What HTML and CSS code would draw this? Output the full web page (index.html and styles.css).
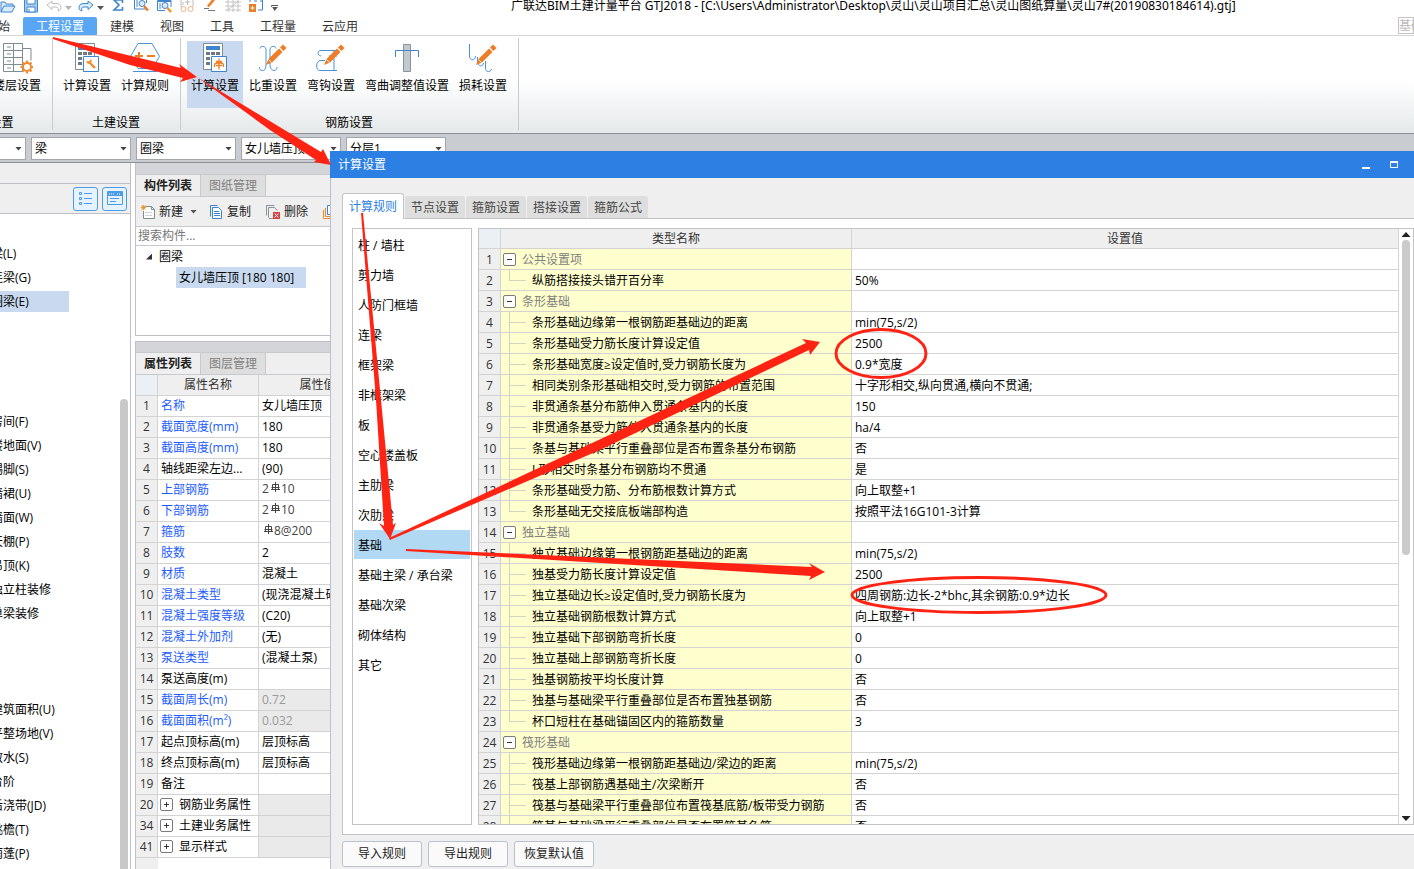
FILE: index.html
```html
<!DOCTYPE html>
<html lang="zh-CN">
<head>
<meta charset="utf-8">
<title>广联达BIM土建计量平台 GTJ2018</title>
<link rel="stylesheet" href="styles.css">
</head>
<body>
<div class="app">
  <header class="titlebar">
    <div class="quick">
      <button class="q" aria-label="打开"><svg width="16" height="16" viewBox="0 0 16 16"><path d="M1 12V2h4l1 2h7v2M1 12l3-6h11l-3 6z" class="lb"/></svg></button>
      <button class="q" aria-label="保存"><svg width="16" height="16" viewBox="0 0 16 16"><path d="M1.500-1h13v13h-13z" fill="#a9cdf0" stroke="#3f84cf"/><path d="M4-1h8v5H4z M4 7h8v5H4z" fill="#fff" stroke="#3f84cf"/><path d="M6 9v3" stroke="#3f84cf"/></svg></button>
      <span class="qpair"><button class="q" aria-label="撤销"><svg width="16" height="16" viewBox="0 0 16 16"><path d="M1 5l5-4v2.500h4c3 0 5 1.500 5 4 0 2-1 3-3 3.500 1-2.500 0-4-2-4H6v2.500z" fill="#fff" stroke="#bdbdbd"/></svg></button><i class="caret faint"></i></span>
      <span class="qpair"><button class="q" aria-label="恢复"><svg width="16" height="16" viewBox="0 0 16 16"><path d="M15 5l-5-4v2.500H6c-3 0-5 1.500-5 4 0 2 1 3 3 3.500-1-2.500 0-4 2-4h4v2.500z" fill="#d9ebfb" stroke="#3f84cf"/></svg></button><i class="caret"></i></span>
      <button class="q" aria-label="汇总计算"><svg width="16" height="16" viewBox="0 0 16 16"><path d="M12.500 3V0H4l5 5-5 5h8.500V7" fill="none" stroke="#3f84cf" stroke-width="1.600"/></svg></button>
      <button class="q" aria-label="查看计算式"><svg width="16" height="16" viewBox="0 0 16 16"><path d="M1.500-2v11h12" fill="none" stroke="#3f84cf"/><path d="M4-1v8M13.500-1v4" stroke="#3f84cf"/><circle cx="9" cy="3.500" r="3" class="lb"/><path d="M11 6l4 4.500" stroke="#ee7d26" stroke-width="2.500"/></svg></button>
      <button class="q" aria-label="查看工程量"><svg width="16" height="16" viewBox="0 0 16 16"><path d="M15 7V.500H1.500v10H9M1 1.500h14" fill="none" stroke="#3f84cf"/><circle cx="9" cy="5.500" r="3" class="lb"/><path d="M3 4h2M3 6h2M3 8h2" stroke="#3f84cf"/><path d="M11.500 8l3.500 4" stroke="#f0962a" stroke-width="2.500"/></svg></button>
      <button class="q" aria-label="查看钢筋"><svg width="16" height="16" viewBox="0 0 16 16"><path d="M2 7V-1h12v8M6 2h5M8.500-1v6M4 2v3" fill="none" stroke="#bcbcbc"/><circle cx="4.500" cy="9" r="2.500" fill="none" stroke="#f3b489"/><circle cx="11.500" cy="9" r="2.500" fill="none" stroke="#f3b489"/></svg></button>
      <button class="q" aria-label="编辑"><svg width="16" height="16" viewBox="0 0 16 16"><path d="M6 6.500L13-2" stroke="#ee7d26" stroke-width="2.600"/><path d="M2 8.500h5M6 10.500h7" stroke="#777"/></svg></button>
      <button class="q" aria-label="轴网"><svg width="16" height="16" viewBox="0 0 16 16"><path d="M0 2h16M0 6h16M0 10h16M3-1v13M8-1v13M13-1v13M3 10l10-9" fill="none" stroke="#c4c4c4"/></svg></button>
      <button class="q" aria-label="添加"><svg width="16" height="16" viewBox="0 0 16 16"><path d="M6 1h3M14.500-1v11H10M12 1h3M2-1v3" fill="none" stroke="#3f84cf"/><path d="M1 4h7v8H1z" fill="#ee7d26"/><path d="M2.500 8h4M4.500 6v4" stroke="#fff"/></svg></button>
      <i class="caret bar"></i>
    </div>
    <h1 class="apptitle">广联达BIM土建计量平台 GTJ2018 - [C:\Users\Administrator\Desktop\灵山\灵山项目汇总\灵山图纸算量\灵山7#(20190830184614).gtj]</h1>
  </header>

  <nav class="menu">
    <button class="mi">开始</button><button class="mi on">工程设置</button><button class="mi">建模</button><button class="mi">视图</button><button class="mi">工具</button><button class="mi">工程量</button><button class="mi">云应用</button>
    <button class="menubox">基础</button>
  </nav>

  <section class="ribbon">
    <div class="rgroup first">
      <div class="rtools">
        <button class="tool"><svg width="32" height="32" viewBox="0 0 32 32"><g fill="none" stroke="#7e8c93"><path d="M2.500 1.500h19v28h-19zM2.500 8.500h19M2.500 15.500h19M2.500 22.500h19M12.500 1.500v28M22 6.500h8v12"/><path d="M6 5h4M6 12h4M6 19h4M6 26h4"/></g><circle cx="26" cy="25" r="4" fill="#fff" stroke="#ee8a2c" stroke-width="2"/><path d="M26 18.500v2M26 29.500v2M19.500 25h2M30.500 25h2M21.500 20.500l1.500 1.500M29 28l1.500 1.500M30.500 20.500L29 22M23 28l-1.500 1.500" stroke="#ee8a2c" stroke-width="2"/></svg><span>楼层设置</span></button>
      </div>
      <div class="rname">工程设置</div>
    </div>
    <div class="rgroup">
      <div class="rtools">
        <button class="tool"><svg width="32" height="32" viewBox="0 0 32 32"><use href="#calc"/><g transform="translate(12 14)"><path d="M.500.500h15v15H.500z" fill="#fff" stroke="#3f84cf"/><path d="M7 7l5 5" stroke="#ee8a2c" stroke-width="2.400"/><path d="M3 5.500a3 3 0 0 0 4 2 3 3 0 0 0 1-4.500L6.500 5z" fill="#ee8a2c"/></g></svg><span>计算设置</span></button>
        <button class="tool"><svg width="32" height="32" viewBox="0 0 32 32"><path d="M9 1.500h14l7.500 13L23 26.500H9L1.500 14.500z" fill="none" stroke="#4a90d9"/><path d="M4 29.500h24" stroke="#4a90d9"/><path d="M6 14h8M10 10v8M18 14h8" stroke="#ee7d26" stroke-width="2"/></svg><span>计算规则</span></button>
      </div>
      <div class="rname">土建设置</div>
    </div>
    <div class="rgroup">
      <div class="rtools">
        <button class="tool on"><svg width="32" height="32" viewBox="0 0 32 32"><use href="#calc"/><g transform="translate(12 14)"><path d="M.500.500h15v15H.500z" fill="#fff" stroke="#3f84cf"/><path d="M8 2.500v11M3.500 11V9c0-3 9-3 9 0v2M5 5.500h6M5 9.500h6" fill="none" stroke="#ee7d26" stroke-width="1.300"/></g></svg><span>计算设置</span></button>
        <button class="tool"><svg width="32" height="32" viewBox="0 0 32 32"><path d="M3 6.500c0-3 6-3 6 1v15c0 4-1 6-3.500 6S2.500 27 2.500 25M19 6.500c0-3-6-3-6 1v15c0 4 2 6 4 6s3-1.500 3-3.500" fill="none" stroke="#4a90d9"/><use href="#pencil"/></svg><span>比重设置</span></button>
        <button class="tool"><svg width="32" height="32" viewBox="0 0 32 32"><path d="M21 8.500H6c-4 0-4 5 0 5.500M19 8v20M10 18.500H5c-4.500 1-4.500 10 0 10h17M14 14h8" fill="none" stroke="#4a90d9"/><use href="#pencil"/></svg><span>弯钩设置</span></button>
        <button class="tool"><svg width="32" height="32" viewBox="0 0 32 32"><path d="M12.500 2.500h7v27h-7z" fill="#c3c9cd" stroke="#87939a"/><path d="M4.500 15V8.500h23V15" fill="none" stroke="#3f84cf"/></svg><span>弯曲调整值设置</span></button>
        <button class="tool"><svg width="32" height="32" viewBox="0 0 32 32"><path d="M2.500 2v12c0 5 6 5 6 0M10.500 15v4c0 6 6 6 6 2M18.500 19v7c0 5 6 4 6 1" fill="none" stroke="#4a90d9"/><use href="#pencil"/></svg><span>损耗设置</span></button>
      </div>
      <div class="rname">钢筋设置</div>
    </div>
  </section>

  <section class="combos">
    <label class="combo lead"><select aria-label="楼层"><option></option></select></label>
    <label class="combo"><select aria-label="构件类别"><option>梁</option></select></label>
    <label class="combo"><select aria-label="构件类型"><option>圈梁</option></select></label>
    <label class="combo"><select aria-label="构件"><option>女儿墙压顶</option></select></label>
    <label class="combo"><select aria-label="分层"><option>分层1</option></select></label>
  </section>

  <main class="work">
    <aside class="nav">
      <div class="navhead"></div>
      <div class="navtools">
        <button class="vb" aria-label="列表"><svg width="16" height="16" viewBox="0 0 16 16"><path d="M1.500 1.500h2v2h-2zM1.500 6.500h2v2h-2zM1.500 11.500h2v2h-2zM6 2.500h8M6 7.500h8M6 12.500h8" fill="none" stroke="#4a9be8"/></svg></button>
        <button class="vb" aria-label="窗口"><svg width="16" height="16" viewBox="0 0 16 16"><path d="M.500.500h15v13H.500z" fill="none" stroke="#4a9be8"/><path d="M1 1h14v4H1z" fill="#4a9be8"/><path d="M2 3h6M10 3h4" stroke="#fff" stroke-dasharray="1 1"/><path d="M3 7.500h9M3 10.500h6" stroke="#4a9be8"/></svg></button>
      </div>
      <div class="navbody">
        <ul class="navlist">
          <li></li><li><a href="#">梁(L)</a></li><li><a href="#">连梁(G)</a></li><li class="on"><a href="#">圈梁(E)</a></li>
          <li></li><li></li><li></li><li></li>
          <li><a href="#">房间(F)</a></li><li><a href="#">楼地面(V)</a></li><li><a href="#">踢脚(S)</a></li><li><a href="#">墙裙(U)</a></li><li><a href="#">墙面(W)</a></li><li><a href="#">天棚(P)</a></li><li><a href="#">吊顶(K)</a></li><li><a href="#">独立柱装修</a></li><li><a href="#">单梁装修</a></li>
          <li></li><li></li><li></li>
          <li><a href="#">建筑面积(U)</a></li><li><a href="#">平整场地(V)</a></li><li><a href="#">散水(S)</a></li><li><a href="#">台阶</a></li><li><a href="#">后浇带(JD)</a></li><li><a href="#">挑檐(T)</a></li><li><a href="#">雨蓬(P)</a></li>
        </ul>
        <div class="navscroll"></div>
      </div>
    </aside>

    <div class="side">
      <section class="panel">
        <div class="strip"></div>
        <div class="ptabs"><button class="pt on">构件列表</button><button class="pt">图纸管理</button></div>
        <div class="ptools">
          <button class="pb"><svg width="16" height="16" viewBox="0 0 16 16"><path d="M5.500 2.500h6l3 3v9h-11V7" fill="#fff" stroke="#7e8c93"/><path d="M11.500 2.500v3h3" fill="none" stroke="#7e8c93"/><path d="M5 8.500h7M5 11.500h7" stroke="#cfd4d7"/><path d="M3.500 1v5M1 3.500h5M1.500 1.500l4 4M5.500 1.500l-4 4" stroke="#f0962a"/></svg>新建<i class="caret"></i></button>
          <button class="pb"><svg width="16" height="16" viewBox="0 0 16 16"><path d="M2.500 12.500v-11h7" fill="none" stroke="#3f84cf"/><path d="M4.500 3.500h6l3 3v8h-9z" fill="#fff" stroke="#3f84cf"/><path d="M6 7.500h5M6 9.500h6M6 11.500h6" stroke="#3f84cf"/></svg>复制</button>
          <button class="pb"><svg width="16" height="16" viewBox="0 0 16 16"><path d="M1.500 11.500v-10h8M3.500 13.500v-10h6l3 3M8 14.500H4" fill="none" stroke="#87939a"/><path d="M8 8h7v7H8z" fill="#d9423c"/><path d="M9.500 9.500l4 4M13.500 9.500l-4 4" stroke="#fff"/></svg>删除</button>
          <button class="pb"><svg width="16" height="16" viewBox="0 0 16 16"><path d="M1.500 6v8.500h10M3.500 4v8.500h9" fill="none" stroke="#ee8a2c"/><path d="M5.500 1.500h8v9h-8z" fill="#fff" stroke="#3f84cf"/></svg>层间复制</button>
        </div>
        <input class="search" type="text" placeholder="搜索构件..." aria-label="搜索构件">
        <div class="tree">
          <div class="troot"><i class="tri"></i>圈梁</div>
          <button class="tleaf">女儿墙压顶 [180 180]</button>
        </div>
      </section>
      <section class="panel grow">
        <div class="strip"></div>
        <div class="ptabs"><button class="pt on">属性列表</button><button class="pt">图层管理</button></div>
        <table class="grid props">
          <colgroup><col class="c-num"><col class="c-prop"><col></colgroup>
          <thead><tr><th class="corner"></th><th>属性名称</th><th>属性值</th></tr></thead>
          <tbody>
            <tr class="b"><th>1</th><td>名称</td><td>女儿墙压顶</td></tr>
            <tr class="b"><th>2</th><td>截面宽度(mm)</td><td>180</td></tr>
            <tr class="b"><th>3</th><td>截面高度(mm)</td><td>180</td></tr>
            <tr><th>4</th><td>轴线距梁左边...</td><td>(90)</td></tr>
            <tr class="b"><th>5</th><td>上部钢筋</td><td class="bar">2<svg width="12" height="12"><use href="#rebar"/></svg>10</td></tr>
            <tr class="b"><th>6</th><td>下部钢筋</td><td class="bar">2<svg width="12" height="12"><use href="#rebar"/></svg>10</td></tr>
            <tr class="b"><th>7</th><td>箍筋</td><td class="bar"><svg width="12" height="12"><use href="#rebar"/></svg>8@200</td></tr>
            <tr class="b"><th>8</th><td>肢数</td><td>2</td></tr>
            <tr class="b"><th>9</th><td>材质</td><td>混凝土</td></tr>
            <tr class="b"><th>10</th><td>混凝土类型</td><td>(现浇混凝土碎石)</td></tr>
            <tr class="b"><th>11</th><td>混凝土强度等级</td><td>(C20)</td></tr>
            <tr class="b"><th>12</th><td>混凝土外加剂</td><td>(无)</td></tr>
            <tr class="b"><th>13</th><td>泵送类型</td><td>(混凝土泵)</td></tr>
            <tr><th>14</th><td>泵送高度(m)</td><td></td></tr>
            <tr class="b"><th>15</th><td>截面周长(m)</td><td class="ro">0.72</td></tr>
            <tr class="b"><th>16</th><td>截面面积(m²)</td><td class="ro">0.032</td></tr>
            <tr><th>17</th><td>起点顶标高(m)</td><td>层顶标高</td></tr>
            <tr><th>18</th><td>终点顶标高(m)</td><td>层顶标高</td></tr>
            <tr><th>19</th><td>备注</td><td></td></tr>
            <tr><th>20</th><td class="exp"><button class="box plus" aria-label="展开"></button>钢筋业务属性</td><td class="ro"></td></tr>
            <tr><th>34</th><td class="exp"><button class="box plus" aria-label="展开"></button>土建业务属性</td><td class="ro"></td></tr>
            <tr><th>41</th><td class="exp"><button class="box plus" aria-label="展开"></button>显示样式</td><td class="ro"></td></tr>
          </tbody>
        </table>
        <div class="rest"></div>
      </section>
    </div>
  </main>
</div>

<section class="dialog" role="dialog" aria-label="计算设置">
  <header class="dtitle"><h2>计算设置</h2>
    <button class="wb" aria-label="最小化"><svg width="10" height="10"><path d="M1 8h8" stroke="#fff" stroke-width="2"/></svg></button>
    <button class="wb" aria-label="最大化"><svg width="10" height="10"><path d="M1.500 2.500h7v5h-7zM1 1.500h8" fill="none" stroke="#fff"/></svg></button>
  </header>
  <div class="dbody">
    <div class="dtabs"><button class="dt on">计算规则</button><button class="dt">节点设置</button><button class="dt">箍筋设置</button><button class="dt">搭接设置</button><button class="dt">箍筋公式</button></div>
    <div class="dpane">
      <div class="cats">
        <button>柱 / 墙柱</button><button>剪力墙</button><button>人防门框墙</button><button>连梁</button><button>框架梁</button><button>非框架梁</button><button>板</button><button>空心楼盖板</button><button>主肋梁</button><button>次肋梁</button><button class="on">基础</button><button>基础主梁 / 承台梁</button><button>基础次梁</button><button>砌体结构</button><button>其它</button>
      </div>
      <div class="rules">
        <div class="rview">
        <table class="grid rtable">
          <colgroup><col class="c-num"><col class="c-rule"><col></colgroup>
          <thead><tr><th class="corner"></th><th>类型名称</th><th>设置值</th></tr></thead>
          <tbody>
            <tr><th>1</th><td class="grp"><button class="box" aria-label="折叠"></button>公共设置项</td><td></td></tr>
            <tr><th>2</th><td class="leaf last">纵筋搭接接头错开百分率</td><td>50%</td></tr>
            <tr><th>3</th><td class="grp"><button class="box" aria-label="折叠"></button>条形基础</td><td></td></tr>
            <tr><th>4</th><td class="leaf">条形基础边缘第一根钢筋距基础边的距离</td><td>min(75,s/2)</td></tr>
            <tr><th>5</th><td class="leaf">条形基础受力筋长度计算设定值</td><td>2500</td></tr>
            <tr><th>6</th><td class="leaf">条形基础宽度≥设定值时,受力钢筋长度为</td><td>0.9*宽度</td></tr>
            <tr><th>7</th><td class="leaf">相同类别条形基础相交时,受力钢筋的布置范围</td><td>十字形相交,纵向贯通,横向不贯通;</td></tr>
            <tr><th>8</th><td class="leaf">非贯通条基分布筋伸入贯通条基内的长度</td><td>150</td></tr>
            <tr><th>9</th><td class="leaf">非贯通条基受力筋伸入贯通条基内的长度</td><td>ha/4</td></tr>
            <tr><th>10</th><td class="leaf">条基与基础梁平行重叠部位是否布置条基分布钢筋</td><td>否</td></tr>
            <tr><th>11</th><td class="leaf">L形相交时条基分布钢筋均不贯通</td><td>是</td></tr>
            <tr><th>12</th><td class="leaf">条形基础受力筋、分布筋根数计算方式</td><td>向上取整+1</td></tr>
            <tr><th>13</th><td class="leaf last">条形基础无交接底板端部构造</td><td>按照平法16G101-3计算</td></tr>
            <tr><th>14</th><td class="grp"><button class="box" aria-label="折叠"></button>独立基础</td><td></td></tr>
            <tr><th>15</th><td class="leaf">独立基础边缘第一根钢筋距基础边的距离</td><td>min(75,s/2)</td></tr>
            <tr><th>16</th><td class="leaf">独基受力筋长度计算设定值</td><td>2500</td></tr>
            <tr><th>17</th><td class="leaf">独立基础边长≥设定值时,受力钢筋长度为</td><td>四周钢筋:边长-2*bhc,其余钢筋:0.9*边长</td></tr>
            <tr><th>18</th><td class="leaf">独立基础钢筋根数计算方式</td><td>向上取整+1</td></tr>
            <tr><th>19</th><td class="leaf">独立基础下部钢筋弯折长度</td><td>0</td></tr>
            <tr><th>20</th><td class="leaf">独立基础上部钢筋弯折长度</td><td>0</td></tr>
            <tr><th>21</th><td class="leaf">独基钢筋按平均长度计算</td><td>否</td></tr>
            <tr><th>22</th><td class="leaf">独基与基础梁平行重叠部位是否布置独基钢筋</td><td>否</td></tr>
            <tr><th>23</th><td class="leaf last">杯口短柱在基础锚固区内的箍筋数量</td><td>3</td></tr>
            <tr><th>24</th><td class="grp"><button class="box" aria-label="折叠"></button>筏形基础</td><td></td></tr>
            <tr><th>25</th><td class="leaf">筏形基础边缘第一根钢筋距基础边/梁边的距离</td><td>min(75,s/2)</td></tr>
            <tr><th>26</th><td class="leaf">筏基上部钢筋遇基础主/次梁断开</td><td>否</td></tr>
            <tr><th>27</th><td class="leaf">筏基与基础梁平行重叠部位布置筏基底筋/板带受力钢筋</td><td>否</td></tr>
            <tr><th>28</th><td class="leaf">筏基与基础梁平行重叠部位是否布置筏基负筋</td><td>否</td></tr>
          </tbody>
        </table>
        </div>
        <div class="vscroll"><i class="up"></i><div class="track"><div class="thumb"></div></div><i class="down"></i></div>
      </div>
    </div>
    <footer class="dfoot"><button>导入规则</button><button>导出规则</button><button>恢复默认值</button></footer>
  </div>
</section>

<svg class="marks" width="1414" height="869" viewBox="0 0 1414 869" aria-hidden="true">
  <g fill="#ff2313">
    <path d="M53 37L181 68L179 64L197 77L180 82L183 78L130 65L53 39Z"/>
    <path d="M197 77L321 152L323 149L331 165L314 162L316 160L270 130Z"/>
    <path d="M361 213H363L381 400L393 525L396 523L390 539L379 523L384 526L376 400Z"/>
    <path d="M389 538L806 343L802 339L820 342L810 355L809 350L600 450L390 540Z"/>
    <path d="M406 549L812 567L809 563L825 572L809 580L811 576L406 551Z"/>
  </g>
  <g fill="none" stroke="#ff2313" stroke-width="3">
    <ellipse cx="881" cy="353.500" rx="45" ry="24"/>
    <ellipse cx="979" cy="595" rx="127" ry="17.500"/>
  </g>
</svg>

<svg class="defs" width="0" height="0" aria-hidden="true">
  <symbol id="calc" viewBox="0 0 32 32"><path d="M4.500 1.500h19v26h-19z" fill="#fff" stroke="#7e8c93"/><path d="M7 4h14v4H7z" fill="#3f84cf"/><g fill="#6d7a82"><path d="M7 10h4v3H7zM12 10h4v3h-4zM17 10h4v3h-4zM7 15h4v3H7zM7 20h4v3H7z"/></g></symbol>
  <symbol id="pencil" viewBox="0 0 32 32"><path d="M9 23l2.500-6L22 6.500l3.500 3.500L15 20.500z" fill="#ee7d26"/><path d="M23 5.500l3-3L29.500 6l-3 3z" fill="#ee7d26"/><path d="M11.500 17.500l3 3" stroke="#fff"/></symbol>
  <symbol id="rebar" viewBox="0 0 12 12"><path d="M6.500 1v10M2 8.500h9M3.500 8.500v-5h6v5M2.500 6.500h8" fill="none" stroke="#444"/></symbol>
</svg>
</body>
</html>
```
FILE: styles.css
```css
* { box-sizing: border-box; }
html, body { height: 100%; }
body {
  margin: 0;
  overflow: hidden;
  position: relative;
  background: #fff;
  color: #000;
  font: 12px/20px "Open Sans", "Noto Sans CJK SC", sans-serif;
}
button, input, select { font: inherit; color: inherit; margin: 0; padding: 0; border: 0; background: none; }
button { white-space: nowrap; text-align: left; }
h1, h2 { margin: 0; font: inherit; }
ul { margin: 0; padding: 0; list-style: none; }
a { color: inherit; text-decoration: none; }
svg { display: block; flex: none; }
.defs { position: absolute; }

.app { height: 100%; display: flex; flex-direction: column; background: #fff; }

.titlebar { height: 17px; flex: none; display: flex; align-items: flex-start; overflow: hidden; }
.quick { width: 511px; flex: none; display: flex; gap: 7px; }
.q { width: 16px; height: 16px; flex: none; overflow: hidden; }
.qpair { display: flex; gap: 3px; align-items: center; width: 25px; }
.lb { fill: #d9ebfb; stroke: #3f84cf; }
.apptitle { font-family: "Noto Sans", "Noto Sans CJK SC", sans-serif; line-height: 12px; white-space: nowrap; }

.caret { flex: none; width: 7px; height: 4px; background: #555; clip-path: polygon(0 0, 100% 0, 50% 100%); }
.caret.faint { background: #b5b5b5; }
.caret.bar { height: 6px; align-self: center; clip-path: polygon(0 0, 100% 0, 100% 1px, 0 1px, 0 2px, 100% 2px, 50% 100%); }

.menu { height: 19px; flex: none; display: flex; border-bottom: 1px solid #d5d5d5; margin-left: -27px; color: #333; }
.mi { padding: 0 13px; line-height: 20px; }
.mi.on { background: #58a6f4; color: #fff; border-radius: 2px 2px 0 0; }
.menubox { margin-left: auto; width: 16px; height: 17px; border: 1px solid #c4c4c4; color: #bbb; line-height: 16px; overflow: hidden; }

.ribbon { height: 98px; flex: none; display: flex; padding: 2px 0 3px; background: linear-gradient(#fff 45%, #e5e9ea); border-bottom: 1px solid #8d9196; }
.rgroup { display: flex; flex-direction: column; justify-content: space-between; padding: 3px 7px 0 6px; border-right: 1px solid #c9cbcd; }
.rgroup.first { width: 125px; margin-left: -72px; align-items: flex-end; }
.rgroup.first .rname { width: 100%; }
.rtools { display: flex; gap: 2px; }
.tool { height: 67px; padding: 0 4px; display: flex; flex-direction: column; align-items: center; gap: 2px; }
.tool svg { margin-top: 1px; }
.tool.on { background: #c9daf0; }
.rname { text-align: center; line-height: 15px; }

.combos { height: 29px; flex: none; display: flex; gap: 5px; padding: 3px 0; background: #c9ccd0; border-bottom: 1px solid #8d9196; }
.combo { width: 100px; height: 23px; flex: none; display: flex; align-items: center; padding-right: 3px; border: 1px solid #a3a6aa; background: #fff; }
.combo.lead { margin-left: -74px; }
.combo select { flex: 1; min-width: 0; height: 21px; appearance: none; padding: 1px 0 0 3px; outline: 0; }
.combo::after { content: ""; width: 7px; height: 4px; background: #444; clip-path: polygon(0 0, 100% 0, 50% 100%); }

.work { flex: 1; min-height: 0; display: flex; gap: 4px; background: #fff; }
.nav { width: 131px; flex: none; display: flex; flex-direction: column; border-right: 1px solid #bfc0c6; }
.navhead { height: 21px; background: #efefef; border-bottom: 1px solid #bfc0c6; }
.navtools { height: 30px; display: flex; justify-content: flex-end; align-items: center; gap: 4px; padding-right: 3px; background: #efefef; border-bottom: 1px solid #bfc0c6; }
.vb { width: 25px; height: 24px; display: grid; place-items: center; border: 1px solid #4a9be8; border-radius: 3px; background: #e6f2fd; }
.navbody { flex: 1; min-height: 0; display: flex; justify-content: space-between; overflow: hidden; }
.navlist { width: 69px; padding-top: 4px; }
.navlist li { height: 24px; line-height: 24px; white-space: nowrap; }
.navlist a { margin-left: -9px; }
.navlist .on { height: 21px; line-height: 21px; margin: 1px 0 2px; background: #c9daf0; }
.navscroll { width: 8px; margin: 185px 2px 0 0; border-radius: 4px 4px 0 0; background: #c8c8c8; }

.side { width: 243px; flex: none; display: flex; flex-direction: column; gap: 5px; }
.panel { flex: none; display: flex; flex-direction: column; border: 1px solid #bfc0c6; border-top: 0; }
.panel.grow { flex: 1; min-height: 0; overflow: hidden; border-top: 1px solid #bfc0c6; border-bottom: 0; }
.strip { height: 11px; flex: none; background: #d4d5d9; }
.grow .strip { height: 10px; }
.ptabs { height: 23px; flex: none; display: flex; background: #efefef; border: solid #c8c9cd; border-width: 1px 0; }
.pt { width: 65px; text-align: center; border-right: 1px solid #c8c9cd; background: #dedede; color: #808080; }
.pt.on { background: #efefef; color: #222; font-weight: bold; }
.ptools { height: 30px; flex: none; display: flex; align-items: center; gap: 14px; padding-left: 4px; background: #efefef; border-bottom: 1px solid #c8c9cd; overflow: hidden; color: #222; }
.pb { display: flex; align-items: center; gap: 3px; }
.pb .caret { margin: 0 -3px 0 4px; }
.search { height: 19px; flex: none; padding: 0 2px; border-bottom: 1px solid #c8c9cd; outline: 0; }
.search::placeholder { color: #777; opacity: 1; }
.tree { height: 89px; }
.troot { display: flex; align-items: center; gap: 7px; padding-left: 10px; height: 21px; }
.tri { width: 6px; height: 6px; background: #333; clip-path: polygon(100% 0, 100% 100%, 0 100%); }
.tleaf { display: block; width: 130px; height: 21px; margin-left: 40px; padding-left: 3px; background: #c9daf0; }

.grid { width: 100%; table-layout: fixed; border-collapse: separate; border-spacing: 0; }
.grid th, .grid td { height: 21px; padding: 0 3px; line-height: 20px; font-weight: normal; white-space: nowrap; overflow: hidden; border: solid #d3d3d3; border-width: 0 1px 1px 0; }
.grid th { padding: 0; text-align: center; background: #efefef; color: #333; }
.grid .corner { background: #eaf0f6; }
.grid td { text-align: left; }
.c-num { width: 22px; }
.c-prop { width: 101px; }
.c-rule { width: 351px; }
.props { flex: none; }
.props .b td:nth-child(2) { color: #1e5cff; }
.props .exp { padding-left: 2px; }
.props .ro { background: #eaeaea; color: #999; }
.props .bar { color: #444; line-height: 18px; padding-bottom: 2px; }
.bar svg { display: inline-block; vertical-align: 0; }
.rest { width: 22px; flex: 1; background: #efefef; }
.box { width: 13px; height: 13px; margin-right: 6px; vertical-align: -1px; border: 1px solid #7b7b7b; border-radius: 2px; background: linear-gradient(#333, #333) center / 5px 1px no-repeat #fff; }
.box.plus { background: linear-gradient(#333, #333) center / 5px 1px no-repeat, linear-gradient(#333, #333) center / 1px 5px no-repeat #fff; }

.dialog { position: absolute; left: 330px; top: 151px; right: 0; bottom: 0; display: flex; flex-direction: column; background: #efefef; }
.dtitle { height: 27px; flex: none; display: flex; align-items: center; gap: 18px; padding: 0 15px 0 8px; background: #2c80e3; color: #fff; }
.dtitle h2 { flex: 1; }
.wb { width: 10px; height: 10px; }
.dbody { flex: 1; min-height: 0; display: flex; flex-direction: column; padding: 15px 0 2px 11px; border-left: 1px solid #b9c0d0; }
.dtabs { height: 26px; flex: none; display: flex; align-items: flex-end; gap: 1px; }
.dt { width: 60px; height: 22px; margin-bottom: 1px; text-align: center; border-radius: 3px 3px 0 0; background: #dedede; color: #444; line-height: 24px; }
.dt.on { width: 62px; height: 26px; margin-bottom: 0; border: 1px solid #c4c4c8; border-bottom: 0; background: #fff; color: #2c80e3; position: relative; }
.dpane { flex: 1; min-height: 0; display: flex; gap: 6px; margin-top: -1px; padding: 9px 0 9px 9px; background: #fff; border: 1px solid #c4c4c8; border-right: 0; }
.cats { width: 120px; flex: none; padding: 1px; border: 1px solid #c4c4c8; overflow: hidden; }
.cats button { display: block; width: 100%; height: 29px; margin-bottom: 1px; padding-left: 4px; line-height: 32px; }
.cats .on { background: #b2d9f4; }
.rules { flex: 1; min-width: 0; display: flex; border: 1px solid #c4c4c8; }
.rview { flex: 1; min-width: 0; overflow: hidden; }
.rtable th, .rtable td { padding-top: 1px; line-height: 19px; }
.rtable thead th { height: 20px; line-height: 18px; padding-top: 1px; }
.rtable tbody th { padding-top: 1px; }
.rtable td:nth-child(2) { background-color: #ffffce; }
.rtable .grp { padding-left: 2px; color: #808080; }
.rtable .leaf { padding-left: 31px; background-image: linear-gradient(#d3d3c4, #d3d3c4), linear-gradient(#d3d3c4, #d3d3c4); background-repeat: no-repeat; background-size: 1px 100%, 16px 1px; background-position: 8px 0, 9px 10px; }
.rtable .last { background-size: 1px 11px, 16px 1px; }
.vscroll { width: 14px; flex: none; display: flex; flex-direction: column; align-items: center; gap: 3px; padding: 3px 0; }
.up, .down { width: 9px; height: 5px; background: #222; clip-path: polygon(50% 0, 100% 100%, 0 100%); }
.down { clip-path: polygon(0 0, 100% 0, 50% 100%); }
.track { flex: 1; width: 8px; }
.thumb { height: 55%; border-radius: 4px; background: #cacaca; }
.dfoot { flex: none; display: flex; gap: 6px; padding-top: 6px; }
.dfoot button { width: 80px; height: 26px; text-align: center; border: 1px solid #b9c0d0; border-radius: 3px; background: #fafafa; color: #222; }

.marks { position: absolute; left: 0; top: 0; pointer-events: none; }
```
